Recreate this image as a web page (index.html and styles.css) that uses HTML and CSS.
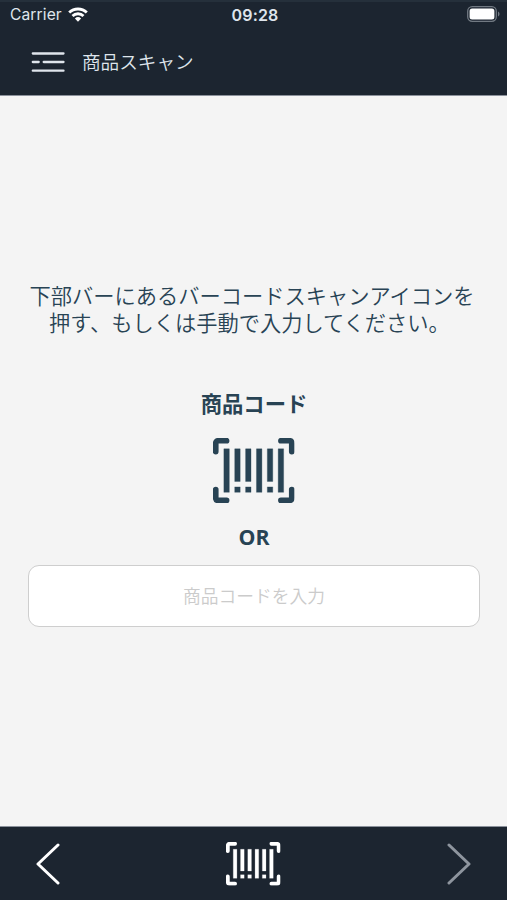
FILE: index.html
```html
<!DOCTYPE html>
<html lang="ja">
<head>
<meta charset="utf-8">
<meta name="viewport" content="width=device-width, initial-scale=1">
<title>商品スキャン</title>
<link rel="stylesheet" href="styles.css">
</head>
<body>
<svg width="0" height="0" class="defs" aria-hidden="true">
  <symbol id="barcode" viewBox="0 0 15 12">
    <path d="M2.5 .5H1Q.5 .5 .5 1V2.5M12.5 .5H14Q14.5 .5 14.5 1V2.5M.5 9.5V11Q.5 11.5 1 11.5H2.5M14.5 9.5V11Q14.5 11.5 14 11.5H12.5" fill="none" stroke="currentColor" stroke-width="1.05" stroke-linecap="round" stroke-linejoin="round"/>
    <path d="M2 2h1v8H2zM4 2h1v6H4zM4 9h1v1H4zM6 2h1v6H6zM6 9h1v1H6zM8 2h1v8H8zM10 2h1v6h-1zM10 9h1v1h-1zM12 2h1v8h-1z" fill="currentColor" stroke="currentColor" stroke-width=".06"/>
  </symbol>
</svg>
<div class="app">
  <header class="header">
    <div class="status">
      <div class="carrier">
        <span>Carrier</span>
        <svg class="wifi" viewBox="0 0 20 15" fill="none" stroke="currentColor" stroke-width="2.8">
          <path d="M1.2 5.6a12.5 12.5 0 0 1 17.6 0M4.5 9a7.8 7.8 0 0 1 11 0"/>
          <path d="M10 14.8 6.9 11.5a4.5 4.5 0 0 1 6.2 0z" fill="currentColor" stroke="none"/>
        </svg>
      </div>
      <time class="clock">09:28</time>
      <svg class="battery" viewBox="0 0 33 16">
        <rect x=".7" y=".7" width="28.6" height="14.6" rx="4.5" fill="none" stroke="#717982" stroke-width="1.3"/>
        <rect x="2.6" y="2.6" width="24.8" height="10.8" rx="2.5" fill="#fff"/>
        <path d="M31 5.5c2 .8 2 4.2 0 5z" fill="#717982"/>
      </svg>
    </div>
    <div class="titlebar">
      <svg class="menu" viewBox="0 0 34 21" stroke="currentColor" stroke-width="2.3" stroke-linecap="round">
        <path d="M1.8 1.5H32.5M1.8 10H7.7M12.7 10H32.5M1.8 18.7H32.5"/>
      </svg>
      <h1 class="title">商品スキャン</h1>
    </div>
  </header>
  <main class="content">
    <p class="message">下部バーにあるバーコードスキャンアイコンを<br><span class="message-end">押す、もしくは手動で入力してください。</span></p>
    <h2 class="label">商品コード</h2>
    <svg class="scan-icon"><use href="#barcode"/></svg>
    <div class="or">OR</div>
    <input class="code-input" type="text" placeholder="商品コードを入力">
  </main>
  <footer class="footer">
    <svg class="arrow" viewBox="0 0 24 42"><path d="M22 2 2 21 22 40"/></svg>
    <svg class="scan-button"><use href="#barcode"/></svg>
    <svg class="arrow arrow-disabled" viewBox="0 0 24 42"><path d="M2 2 22 21 2 40"/></svg>
  </footer>
</div>
</body>
</html>
```
FILE: styles.css
```css
* { box-sizing: border-box; }
body {
  margin: 0;
  font-family: "Open Sans", "Noto Sans CJK JP", sans-serif;
  color: #284354;
}
svg { display: block; flex: none; }
.defs { position: absolute; }
.app {
  height: 900px;
  display: flex;
  flex-direction: column;
  background: #f4f4f4;
}
.header {
  height: 96px;
  flex: none;
  background: #1c2530;
  border-top: 2px solid #25303b;
  border-bottom: 1px solid #8b919b;
  color: #dfe5ec;
}
.status {
  height: 25px;
  display: grid;
  grid-template-columns: 1fr auto 1fr;
  align-items: center;
  padding: 0 7px 0 10px;
  font-family: Inter, sans-serif;
  font-size: 15.6px;
}
.carrier { display: flex; align-items: center; gap: 6px; letter-spacing: .1px; }
.wifi { width: 20px; height: 15px; color: #fff; }
.clock { font-weight: 600; font-size: 16px; letter-spacing: .2px; }
.battery { width: 33px; height: 16px; justify-self: end; margin-top: -1px; }
.titlebar {
  height: 65px;
  display: flex;
  align-items: center;
  padding-left: 31px;
  gap: 17px;
}
.menu { width: 34px; height: 21px; margin-top: 5px; }
.title {
  margin: 1px 0 0;
  font: 350 18.6px/27px "Noto Sans CJK JP", sans-serif;
}
.content {
  flex: 1;
  display: flex;
  flex-direction: column;
  align-items: center;
  padding: 185px 27px 0 28px;
}
.message {
  margin: 0 4px 0 0;
  font: 350 21.25px/27px "Noto Sans CJK JP", sans-serif;
  text-align: center;
  white-space: nowrap;
}
.message-end { padding-right: 5px; }
.label {
  margin: 53px 0 0;
  font: 700 21.3px/30px "Noto Sans CJK JP", sans-serif;
}
.scan-icon { width: 81.5px; height: 65.2px; margin-top: 20px; }
.or { margin-top: 19px; font-size: 21.3px; line-height: 30px; font-weight: 700; }
.code-input {
  width: 100%;
  height: 62px;
  margin-top: 13px;
  padding: 0 2px 3px;
  border: 1.5px solid #cecece;
  border-radius: 11px;
  background: #fff;
  font: 350 17.75px/26px "Noto Sans CJK JP", sans-serif;
  text-align: center;
  outline: none;
}
.code-input::placeholder { color: #cbcbcb; }
.footer {
  height: 74px;
  flex: none;
  display: flex;
  justify-content: space-between;
  align-items: center;
  padding: 1px 36px 0;
  background: #1c2530;
  border-top: 1px solid #8b919b;
  color: #fff;
}
.arrow {
  width: 24px;
  height: 42px;
  fill: none;
  stroke: #fff;
  stroke-width: 3;
  stroke-linecap: round;
  stroke-linejoin: round;
}
.arrow-disabled { stroke: #8e959e; }
.scan-button { width: 54.5px; height: 43.6px; }
```
